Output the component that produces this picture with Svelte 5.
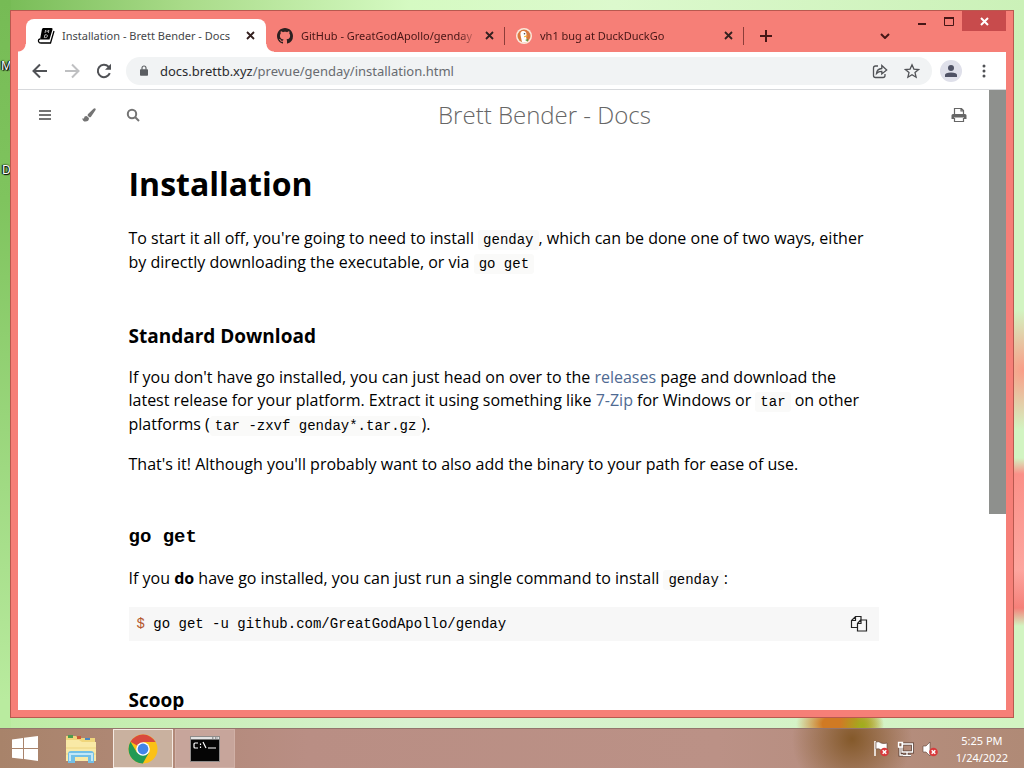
<script>
  let tabs = $state([
    { title: 'Installation - Brett Bender - Docs', icon: 'book' },
    { title: 'GitHub - GreatGodApollo/genday', icon: 'github' },
    { title: 'vh1 bug at DuckDuckGo', icon: 'duck' }
  ]);
  let active = $state(0);
  let url = 'docs.brettb.xyz';
  let path = '/prevue/genday/installation.html';
</script>

<div class="desktop">
  <span class="label first">M</span>
  <span class="label second">D</span>

  <div class="window">
    <header class="titlebar">
      <div class="tabs">
        {#each tabs as tab, i}
          <div class="tab" class:active={i === active}>
            {#if tab.icon === 'book'}
              <svg width="18" height="18" viewBox="0 0 18 18">
                <path d="M6 1h8.500q1.500 0 1 1.500l-3 10H3L5 2Z" fill="#000" />
                <path d="M3 12q-2 .3-1.400 2.600Q2 16 4 16h9.500L17 4" fill="none" stroke="#000" stroke-width="1.300" />
                <path d="M8 6l.6-2.800 1.300 1.400 2-1.400L11.300 6M7.900 7.800h1.600q1.200 0 .9 1.400-.4 1.400-1.700 1.400H7.300Z" fill="none" stroke="#ddd" stroke-width=".8" />
              </svg>
            {:else if tab.icon === 'github'}
              <svg width="16" height="16" viewBox="0 0 16 16">
                <path fill="#2c2020" d="M8 0C3.580 0 0 3.580 0 8c0 3.540 2.290 6.530 5.470 7.590.4.070.55-.17.55-.38 0-.19-.01-.82-.01-1.490-2.010.37-2.530-.49-2.690-.94-.09-.23-.48-.94-.82-1.130-.28-.15-.68-.52-.01-.53.63-.01 1.080.58 1.230.82.72 1.210 1.870.87 2.330.66.07-.52.28-.87.51-1.070-1.780-.2-3.640-.89-3.640-3.950 0-.87.31-1.590.82-2.150-.08-.2-.36-1.020.08-2.120 0 0 .67-.21 2.200.82.64-.18 1.320-.27 2-.27s1.360.09 2 .27c1.530-1.040 2.200-.82 2.200-.82.44 1.100.16 1.920.08 2.120.51.56.82 1.270.82 2.150 0 3.070-1.870 3.750-3.650 3.950.29.25.54.73.54 1.480 0 1.070-.01 1.930-.01 2.200 0 .21.15.46.55.38A8 8 0 0 0 16 8c0-4.420-3.580-8-8-8Z" />
              </svg>
            {:else}
              <svg width="16" height="16" viewBox="0 0 16 16">
                <circle cx="8" cy="8" r="8" fill="#fbe9dc" />
                <circle cx="8" cy="8" r="6.500" fill="#d9793f" />
                <path d="M6 14.200 4.500 7Q4 3.500 6.500 3q4-.5 4 3.500l-.5 2 1 5.200q-2 1.200-5 .5Z" fill="#fff" />
                <path d="M8 8.200q2-1 4-.4-1 1.500-4 1.400Z" fill="#f3b93b" />
                <path d="m9 12 3-1v2.500Z" fill="#5c9d3c" />
                <circle cx="8.500" cy="5.800" r=".8" fill="#444" />
              </svg>
            {/if}
            <button class="tab-title" onclick={() => (active = i)}>{tab.title}</button>
            <button class="icon close" aria-label="Close tab">
              <svg width="9" height="9" viewBox="0 0 9 9"><path d="m1 1 7 7M8 1 1 8" /></svg>
            </button>
          </div>
        {/each}
        <button class="icon new-tab" aria-label="New tab">
          <svg width="12" height="12" viewBox="0 0 12 12"><path d="M6 0v12M0 6h12" /></svg>
        </button>
      </div>
      <button class="icon tab-search" aria-label="Search tabs">
        <svg width="10" height="6" viewBox="0 0 10 6"><path d="m1 1 4 4 4-4" /></svg>
      </button>
      <div class="controls">
        <button class="icon" aria-label="Minimize">
          <svg width="28" height="20" viewBox="0 0 28 20"><path d="M12 13h8" /></svg>
        </button>
        <button class="icon" aria-label="Maximize">
          <svg width="28" height="20" viewBox="0 0 28 20">
            <path d="M10.500 6.500h9v8h-9Z" stroke-width="1" /><path d="M10 7h10" />
          </svg>
        </button>
        <button class="icon exit" aria-label="Close window">
          <svg width="9" height="9" viewBox="0 0 9 9"><path d="m1 1 7 7M8 1 1 8" /></svg>
        </button>
      </div>
    </header>

    <nav class="toolbar">
      <button class="icon" aria-label="Back">
        <svg width="16" height="16" viewBox="0 0 16 16"><path d="M15 8H2M8 1.500 1.500 8 8 14.500" /></svg>
      </button>
      <button class="icon" aria-label="Forward" disabled>
        <svg width="16" height="16" viewBox="0 0 16 16"><path d="M1 8h13M8 1.500 14.500 8 8 14.500" /></svg>
      </button>
      <button class="icon" aria-label="Reload">
        <svg width="16" height="16" viewBox="0 0 16 16">
          <path d="M13.800 10.200A6.200 6.200 0 1 1 12.500 3.600L14 5.200" />
          <path d="M15 .8v6H9Z" fill="#505256" stroke="none" />
        </svg>
      </button>
      <div class="address">
        <svg width="8" height="11" viewBox="0 0 10 13">
          <path d="M1 5h8q1 0 1 1v6q0 1-1 1H1q-1 0-1-1V6q0-1 1-1Z" fill="#5a5d61" />
          <path d="M2.500 5.500V3.300a2.500 2.500 0 0 1 5 0v2.200" fill="none" stroke="#5a5d61" stroke-width="1.400" />
        </svg>
        <span class="url">{url}<span>{path}</span></span>
        <button class="icon" aria-label="Share">
          <svg class="thin" width="16" height="16" viewBox="0 0 16 16">
            <path d="M6 3H3.500Q1.500 3 1.500 5v7.500q0 2 2 2H11q2 0 2-2V11" />
            <path d="M4.500 10.500Q5 5.800 9.800 5.500V2.500L14.700 7l-4.900 4V8.300Q6.500 8.200 4.500 10.500Z" />
          </svg>
        </button>
        <button class="icon" aria-label="Bookmark">
          <svg class="thin" width="16" height="16" viewBox="0 0 16 16">
            <path d="m8 1.800 1.900 4.300 4.700.4-3.600 3.100 1.100 4.600L8 11.800l-4.100 2.400L5 9.600 1.400 6.500l4.700-.4Z" />
          </svg>
        </button>
      </div>
      <button class="icon avatar" aria-label="Profile">
        <svg width="14" height="14" viewBox="0 0 14 14">
          <circle cx="7" cy="4" r="3" fill="#4f5265" stroke="none" />
          <path d="M1 13v-2q0-2.500 6-2.500t6 2.500v2Z" fill="#4f5265" stroke="none" />
        </svg>
      </button>
      <button class="icon menu" aria-label="Menu">
        <svg width="4" height="14" viewBox="0 0 4 14">
          <circle cx="2" cy="2" r="1.500" /><circle cx="2" cy="7" r="1.500" /><circle cx="2" cy="12" r="1.500" />
        </svg>
      </button>
    </nav>

    <div class="viewport">
      <div class="page">
        <div class="menu-bar">
          <div class="side">
            <button class="icon" aria-label="Toggle sidebar">
              <svg width="12" height="12" viewBox="0 0 12 12"><path d="M0 2h12M0 6h12M0 10h12" /></svg>
            </button>
            <button class="icon" aria-label="Change theme">
              <svg width="14" height="14" viewBox="0 0 14 14">
                <path d="M13.300.4q.8.7.1 1.900L9 8.800Q8 9.700 7 9L5.800 7.800q-.5-.8.300-1.700L11.500.8q1-.9 1.800-.4ZM5 8.200l1.900 1.900q.3 3.400-3.500 3.500Q.8 13.600.2 10.200q.9.700 1.700.2.300-2.700 3.100-2.200Z" />
              </svg>
            </button>
            <button class="icon" aria-label="Search">
              <svg width="14" height="14" viewBox="0 0 14 14"><circle cx="6" cy="6" r="4.200" /><path d="m9 9 4 4" /></svg>
            </button>
          </div>
          <h1 class="menu-title">Brett Bender - Docs</h1>
          <button class="icon print" aria-label="Print this book">
            <svg width="16" height="16" viewBox="0 0 16 16">
              <path d="M3.500 7V1.500h7L12.500 3.500V7M10 1.500v2.500h2.500M3.500 11v3.500h9V11" fill="none" stroke-width="1.200" />
              <path d="M2 7h12q1.500 0 1.500 1.500V12H13v-1.500H3V12H.5V8.500Q.5 7 2 7Z" fill="#666" stroke="none" />
            </svg>
          </button>
        </div>

        <main>
          <h1>Installation</h1>
          <p>
            To start it all off, you're going to need to install <code>genday</code>, which can be done one of
            two ways, either by directly downloading the executable, or via <code>go get</code>
          </p>

          <h3>Standard Download</h3>
          <p>
            If you don't have go installed, you can just head on over to the <a href="#releases">releases</a> page
            and download the latest release for your platform. Extract it using something like
            <a href="#7zip">7-Zip</a> for Windows or <code>tar</code> on other platforms
            (<code>tar -zxvf genday*.tar.gz</code>).
          </p>
          <p>That's it! Although you'll probably want to also add the binary to your path for ease of use.</p>

          <h3 class="mono">go get</h3>
          <p>If you <strong>do</strong> have go installed, you can just run a single command to install <code>genday</code>:</p>
          <div class="snippet">
            <pre><span>$</span> go get -u github.com/GreatGodApollo/genday</pre>
            <button class="icon" aria-label="Copy to clipboard">
              <svg width="18" height="18" viewBox="0 0 18 18">
                <path d="M7 12.500H1.500v-7l4-4h5.500V5M1.500 5.500h4v-4M7.500 8.500l3-3.500h6v11h-9ZM7.500 8.500h3.500V5" />
              </svg>
            </button>
          </div>

          <h3>Scoop</h3>
        </main>
      </div>
      <div class="scrollbar"><div class="thumb"></div></div>
    </div>
  </div>

  <footer class="taskbar">
    <button class="task start" aria-label="Start">
      <svg width="28" height="28" viewBox="0 0 28 28" fill="#fff">
        <path d="M1 4.500 12 3v10H1ZM13 2.800 27 1v12H13ZM1 14h11v10L1 22.800ZM13 14h14v12l-14-2Z" />
      </svg>
    </button>
    <button class="task" aria-label="File Explorer">
      <svg width="32" height="30" viewBox="0 0 32 30">
        <path d="M1 2h10l2 2h17v22H1Z" fill="#f0d67c" />
        <path d="M3 1h5v3H3Z" fill="#4c9a50" /><path d="M12 2h4v3h-4Z" fill="#c95b3a" /><path d="M20 4h5v2h-5Z" fill="#4a87bd" />
        <path d="M1 6h13l3 2h14v19H1Z" fill="#f9e9a6" />
        <path d="M1 14h30M1 20h30" stroke="#eed581" />
        <path d="M3 29V20q0-3 3-3h20q3 0 3 3v9h-6v-6H10v6Z" fill="#72bfe6" />
        <path d="M5 27v-7h22v7" fill="none" stroke="#c1e7f7" stroke-width="2" />
      </svg>
    </button>
    <button class="task running current" aria-label="Google Chrome">
      <svg width="30" height="30" viewBox="0 0 30 30">
        <circle cx="15" cy="15" r="14.500" fill="#fbc116" />
        <path d="M15 15 2.500 7.700A14.500 14.500 0 0 1 27.600 8H15Z" fill="#d94a3d" />
        <path d="M2.500 7.700A14.500 14.500 0 0 0 14.800 29.500L21 18.500 15 15 8.900 18.500Z" fill="#229a55" />
        <circle cx="15" cy="15" r="6.800" fill="#fff" /><circle cx="15" cy="15" r="5.400" fill="#4285e8" />
      </svg>
    </button>
    <button class="task running" aria-label="Command Prompt">
      <svg width="30" height="26" viewBox="0 0 30 26">
        <path d="M.5.5h29v25H.5Z" fill="#050505" stroke="#8f8c8b" />
        <path d="M1 1h28v2.500H1Z" fill="#e3e3e3" /><path d="M22 2h1.500M25 2h1.500M27.500 2H28" stroke="#555" />
        <path d="M8 7H5q-1 0-1 1v3q0 1 1 1h3M10.500 7.500v1.500M10.500 10.500V12M13 6l3 6M18 12h8" fill="none" stroke="#fff" stroke-width="1.200" />
      </svg>
    </button>

    <div class="tray">
      <svg width="16" height="17" viewBox="0 0 16 17">
        <path d="M2 1v15" stroke="#fff" stroke-width="1.500" />
        <path d="M3 2q3-1 5 1 3 1 6 0v7q-3 1-6 0-2-2-5-1Z" fill="#fff" stroke="#5d4238" stroke-width=".6" />
        <circle cx="11.500" cy="12" r="4.300" fill="#d8393b" />
        <path d="m9.700 10.200 3.600 3.600m0-3.600-3.600 3.600" stroke="#fff" stroke-width="1.500" />
      </svg>
      <svg width="17" height="16" viewBox="0 0 17 16">
        <path d="M5 3h10.500v8H5ZM10 11v3M6 14.500h8M3 6v8h3" fill="none" stroke="#5d4238" stroke-width="3" />
        <path d="M5 3h10.500v8H5ZM10 11v3M6 14.500h8M3 6v8h3M1.500 1.500h4V6h-4Z" fill="none" stroke="#fff" stroke-width="1.300" />
      </svg>
      <svg width="16" height="16" viewBox="0 0 16 16">
        <path d="M1 5h3l4-4v14l-4-4H1Z" fill="#fff" stroke="#5d4238" stroke-width=".6" />
        <circle cx="11.500" cy="11" r="4.300" fill="#d8393b" />
        <path d="m9.700 9.200 3.600 3.600m0-3.600-3.600 3.600" stroke="#fff" stroke-width="1.500" />
      </svg>
      <div class="clock"><span>5:25 PM</span><span>1/24/2022</span></div>
    </div>
  </footer>
</div>

<style>
  :global(body) {
    margin: 0;
    overflow: hidden;
  }
  .desktop {
    position: relative;
    display: flex;
    flex-direction: column;
    height: 100vh;
    background:
      radial-gradient(ellipse 22px 24px at 862px 726px, #9fae1c 0, #9fae1c00 100%),
      radial-gradient(ellipse 44px 24px at 840px 724px, #d07a24 0, #d07a24 40%, #d07a2400 100%),
      radial-gradient(ellipse 60px 60px at 1024px 370px, #fa9d87 0, #fa9d8700 100%),
      linear-gradient(#fa958700 458px, #fb9088 474px, #fda69f 570px, #f58079 608px, #fa958700 626px) right / 12px 100% no-repeat,
      linear-gradient(#76bb55, #7fc45e 200px, #b9eb9f 700px) left / 11px 100% no-repeat,
      linear-gradient(90deg, #76bb55, #a9db89 18%, #d5fac2 40%, #dcf9cd 60%, #cbf1b8) top / 100% 60px no-repeat,
      linear-gradient(90deg, #bdeca3, #d8f2d0 40%, #d2f4c2);
    font-family: 'Noto Sans', 'Open Sans', sans-serif;
  }
  button {
    margin: 0;
    padding: 0;
    border: 0;
    background: none;
    font: inherit;
    color: inherit;
  }
  svg {
    display: block;
    flex: none;
  }
  .icon {
    display: flex;
    flex: none;
    align-items: center;
    justify-content: center;
  }
  .icon svg {
    stroke: currentColor;
    stroke-width: 2;
    fill: none;
  }

  /* desktop icon captions that stick out behind the window */
  .label {
    position: absolute;
    font-size: 12px;
    line-height: 16px;
    color: #fff;
    text-shadow: 1px 1px 1px #000, -1px 0 1px #000, 0 0 2px #000;
  }
  .first {
    top: 58px;
    left: 1px;
  }
  .second {
    top: 162px;
    left: 2px;
  }

  .window {
    position: relative;
    display: flex;
    flex: 1;
    flex-direction: column;
    min-height: 0;
    margin: 10px;
    padding: 0 7px 7px;
    border: 1px solid #b8594f;
    background: #f67f77;
  }
  .titlebar {
    display: flex;
    height: 41px;
    color: #471616;
  }
  .tabs {
    display: flex;
    flex: 1;
    align-items: flex-end;
    min-width: 0;
    padding-left: 8px;
  }
  .tab {
    display: flex;
    flex: 0 1 239px;
    align-items: center;
    box-sizing: border-box;
    height: 33px;
    min-width: 0;
    padding: 0 11px;
    gap: 8px;
  }
  .tab.active {
    position: relative;
    flex-basis: 240px;
    gap: 7px;
    border-radius: 8px 8px 0 0;
    background: #fff;
    color: #45474a;
  }
  .tab.active::before,
  .tab.active::after {
    content: '';
    position: absolute;
    bottom: 0;
    left: -8px;
    width: 8px;
    height: 8px;
    background: radial-gradient(circle at 0 0, transparent 7px, #fff 8px);
  }
  .tab.active::after {
    left: 100%;
    background: radial-gradient(circle at 100% 0, transparent 7px, #fff 8px);
  }
  .tab:not(.active) {
    background: linear-gradient(#8c3d39, #8c3d39) right center / 1px 18px no-repeat;
  }
  .tab-title {
    flex: 1;
    min-width: 0;
    overflow: hidden;
    font-size: 11px;
    line-height: 20px;
    text-align: left;
    white-space: nowrap;
    mask-image: linear-gradient(90deg, #000 90%, transparent);
  }
  .active .tab-title {
    mask-image: none;
  }
  .close svg {
    color: #33201f;
    stroke-width: 1.8;
  }
  .new-tab {
    width: 44px;
    height: 33px;
  }
  .tab-search {
    width: 28px;
    align-self: flex-end;
    height: 33px;
    margin-right: 7px;
  }
  .controls {
    display: flex;
    align-items: flex-start;
  }
  .exit {
    width: 44px;
    height: 20px;
    background: #c84b4c;
    color: #fff;
  }

  .toolbar {
    display: flex;
    align-items: center;
    height: 37px;
    padding: 0 16px 0 14px;
    gap: 16px;
    border-bottom: 1px solid #d7d9dc;
    background: #fff;
    color: #505256;
  }
  .toolbar button:disabled {
    color: #bfc0c2;
  }
  .address {
    display: flex;
    flex: 1;
    align-items: center;
    height: 28px;
    margin-left: -2px;
    padding: 0 12px 0 14px;
    gap: 16px;
    border-radius: 14px;
    background: #f1f3f4;
  }
  .url {
    flex: 1;
    margin-left: -4px;
    font-size: 13px;
    color: #2b2c2f;
  }
  .url span {
    color: #686b70;
  }
  .icon .thin {
    stroke-width: 1.3;
  }
  .avatar {
    width: 22px;
    height: 22px;
    margin-left: -8px;
    border-radius: 50%;
    background: #dfe0ea;
  }
  .menu {
    width: 12px;
  }
  .menu svg {
    fill: #505256;
    stroke: none;
  }

  .viewport {
    display: flex;
    flex: 1;
    min-height: 0;
    background: #fff;
  }
  .page {
    flex: 1;
    min-width: 0;
    overflow: hidden;
    font-family: 'Open Sans', sans-serif;
    font-size: 16px;
    line-height: 23px;
    color: #000;
  }
  .menu-bar {
    display: flex;
    align-items: center;
    height: 50px;
    padding: 0 22px 0 20px;
    color: #747474;
  }
  .side {
    display: flex;
    gap: 30px;
  }
  .side .icon {
    width: 14px;
  }
  .side .icon:nth-child(2) svg {
    fill: #747474;
    stroke: none;
  }
  .menu-title {
    flex: 1;
    margin: 0;
    padding-right: 2px;
    font-size: 24px;
    font-weight: 300;
    line-height: 50px;
    text-align: center;
    color: #666;
  }
  .print svg {
    color: #666;
  }
  main {
    max-width: 750px;
    margin: 0 auto;
    padding: 0 15px;
  }
  main h1 {
    margin: 21px 0 20px;
    font-size: 32px;
    line-height: 46px;
  }
  main h3 {
    margin: 48px 0 17px;
    font-size: 19px;
    line-height: 26px;
  }
  main p {
    margin: 16px 0;
  }
  a {
    color: #4f6a92;
    text-decoration: none;
  }
  code,
  pre,
  .mono {
    font-family: 'Liberation Mono', monospace;
  }
  code {
    padding: 2px 5px;
    border-radius: 3px;
    background: #fafaf9;
    font-size: 14px;
    line-height: 22px;
  }
  .snippet {
    display: flex;
    align-items: center;
    justify-content: space-between;
    height: 34px;
    padding: 0 11px 0 8px;
    background: #f7f7f7;
  }
  .snippet + h3 {
    margin-top: 46px;
  }
  pre {
    margin: 0;
    font-size: 14px;
  }
  pre span {
    color: #b3562b;
  }
  .snippet svg {
    color: #222;
    stroke-width: 1.2;
  }
  .scrollbar {
    display: flex;
    flex-direction: column;
    width: 17px;
    background: #fff;
  }
  .thumb {
    flex: 13;
    background: #8e908d;
  }
  .scrollbar::after {
    content: '';
    flex: 6;
  }

  .taskbar {
    display: flex;
    flex: none;
    box-sizing: border-box;
    height: 40px;
    border-top: 1px solid #94756c;
    background:
      radial-gradient(ellipse 60px 60px at 852px 10px, #84592a 0, #84592a00 100%),
      linear-gradient(90deg, #a8836a, #b98e84 30%, #bb9186 70%, #b08a76);
  }
  .task {
    display: flex;
    align-items: center;
    justify-content: center;
    box-sizing: border-box;
    width: 60px;
    margin-right: 2px;
  }
  .start {
    width: 49px;
  }
  .running {
    border: 1px solid #d0b0a6;
    background: #c7a59b;
  }
  .current {
    border: 1px solid #f4e9e2;
    background: #c9b19f;
  }
  .tray {
    display: flex;
    align-items: center;
    margin-left: auto;
    padding-right: 16px;
    gap: 8px;
    color: #fff;
  }
  .clock {
    display: flex;
    flex-direction: column;
    align-items: center;
    margin-left: 10px;
    font-size: 11px;
    line-height: 17px;
  }
</style>
